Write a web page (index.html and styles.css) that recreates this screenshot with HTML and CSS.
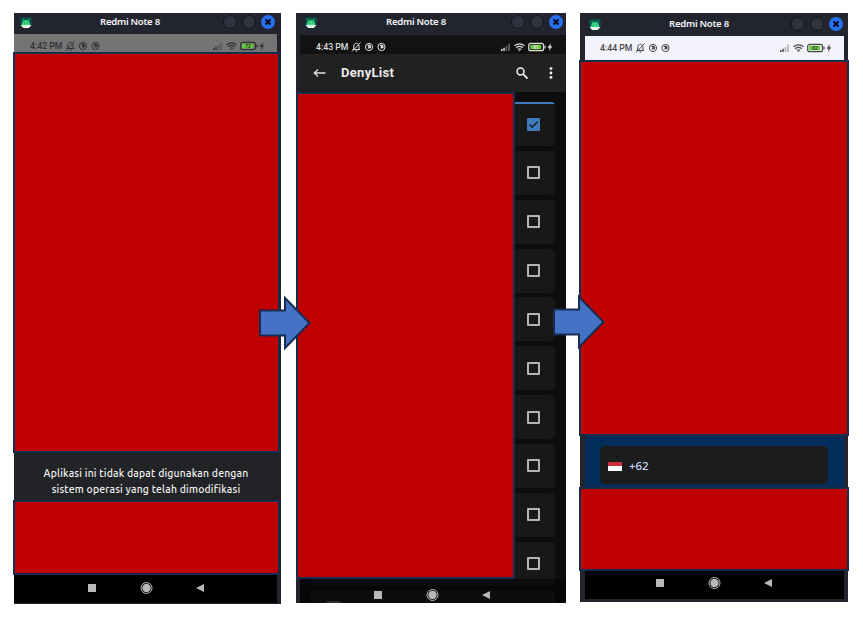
FILE: index.html
```
<!DOCTYPE html>
<html lang="id">
<head>
<meta charset="utf-8">
<title>DenyList</title>
<link rel="stylesheet" href="styles.css">
</head>
<body>
<svg class="defs" aria-hidden="true">
  <symbol id="android" viewBox="0 0 12 12">
    <path fill="#0b5850" d="M.5.5h11v8H.5z"/>
    <path fill="#3ddc84" d="M1.800 8.500C1.800 5 3.600 3.300 6 3.300s4.200 1.700 4.200 5.200z"/>
    <path stroke="#3ddc84" stroke-width=".7" d="M3 2l1 1.800M9 2L8 3.800"/>
    <path fill="#e4f5ec" d="M.5 8h11L10 9.800 8.800 11H3.200L2 9.800z"/>
    <path fill="#17814f" d="M4 5.500h1v1H4zM7 5.500h1v1H7z"/>
  </symbol>
  <symbol id="notices" viewBox="0 0 36 12">
    <g fill="none" stroke="currentColor" stroke-width="1">
      <path d="M1.500 8.500h7.500M2.700 8V5.200C2.700 1.400 8 1.400 8 5.200V8M4.500 10h2M1 10.500L9.500 1.500"/>
      <circle cx="18" cy="6" r="3.600"/><circle cx="30.500" cy="6" r="3.600"/>
      <path stroke-width="1.300" d="M16.500 4.500q2-1 3 .8l-2.500 2M18 4.500v2h2M29 4.500q2-1 3 .8l-2.500 2M30.500 4.500v2h2"/>
    </g>
  </symbol>
  <symbol id="signal" viewBox="0 0 54 12">
    <path fill="currentColor" d="M1 10V8h1.500v2zM3.300 10V6.800h1.500V10z"/>
    <path fill="currentColor" opacity=".4" d="M5.700 10V5h1.600v5zM8.200 10V2.500h1.600V10z"/>
    <g fill="none" stroke="currentColor" stroke-width="1.200">
      <path d="M14.500 4.800q5-4 10 0M16.200 6.700q3.300-2.600 6.600 0M17.800 8.400q1.700-1.300 3.400 0"/>
      <rect x="28.700" y="2.300" width="14.800" height="7.400" rx="2"/>
      <path d="M45 4.500v3"/>
    </g>
    <path fill="currentColor" d="M18.600 9h1.800l-.9 1.200zM50.800 2L47.500 6.700h2L49 10l3.300-4.800h-2z"/>
    <rect class="charge" x="30.200" y="3.700" width="11" height="4.600"/>
  </symbol>
  <symbol id="nav" viewBox="0 0 118 14">
    <path fill="#b9b9b9" d="M1 3h8v8H1zM117 3v8l-8-4z"/>
    <circle cx="59.500" cy="7" r="5.500" fill="none" stroke="#b9b9b9"/>
    <circle cx="59.500" cy="7" r="4.200" fill="#b9b9b9"/>
  </symbol>
  <symbol id="close" viewBox="0 0 14 14">
    <circle cx="7" cy="7" r="7" fill="#2670ee"/>
    <path d="M4.500 4.500l5 5m0-5l-5 5" stroke="#080c18" stroke-width="2"/>
  </symbol>
</svg>

<main class="board">
  <section class="phone phone-blocked">
    <header class="titlebar">
      <svg class="app"><use href="#android"/></svg><span class="name">Redmi Note 8</span>
      <i class="dot"></i><i class="dot"></i><svg class="close"><use href="#close"/></svg>
    </header>
    <div class="status"><span>4:42 PM</span><svg class="notices"><use href="#notices"/></svg>
      <div class="signal"><svg><use href="#signal"/></svg><b>72</b></div></div>
    <div class="mask mask-main"></div>
    <p class="message">Aplikasi ini tidak dapat digunakan dengan<br><span>sistem operasi yang telah dimodifikasi</span></p>
    <div class="mask mask-foot"></div>
    <nav class="nav"><svg><use href="#nav"/></svg></nav>
  </section>

  <section class="phone phone-list">
    <header class="titlebar">
      <svg class="app"><use href="#android"/></svg><span class="name">Redmi Note 8</span>
      <i class="dot"></i><i class="dot"></i><svg class="close"><use href="#close"/></svg>
    </header>
    <div class="status"><span>4:43 PM</span><svg class="notices"><use href="#notices"/></svg>
      <div class="signal"><svg><use href="#signal"/></svg><b>81</b></div></div>
    <div class="appbar">
      <svg class="back" viewBox="0 0 13 10"><path d="M12.500 5H1.500M5 1.500L1.300 5 5 8.500" fill="none" stroke="#dedede" stroke-width="1.300"/></svg>
      <h1>DenyList</h1>
      <svg class="search" viewBox="0 0 12 12"><circle cx="4.500" cy="4.500" r="3.500" fill="none" stroke="#f3f3f3" stroke-width="1.500"/><path d="M7.200 7.200l4.300 4.300" stroke="#f3f3f3" stroke-width="1.800"/></svg>
      <svg class="more" viewBox="0 0 4 12"><g fill="#fff"><circle cx="2" cy="1.600" r="1.400"/><circle cx="2" cy="6" r="1.400"/><circle cx="2" cy="10.400" r="1.400"/></g></svg>
    </div>
    <div class="list">
      <div class="card first"><svg class="check" viewBox="0 0 13 13"><rect width="13" height="13" rx="1" fill="#3f7bb8"/><path d="M2.500 6.500l2.700 2.700 5.300-5.500" fill="none" stroke="#15191e" stroke-width="1.400"/></svg></div>
      <div class="card"><i class="box"></i></div>
      <div class="card"><i class="box"></i></div>
      <div class="card"><i class="box"></i></div>
      <div class="card"><i class="box"></i></div>
      <div class="card"><i class="box"></i></div>
      <div class="card"><i class="box"></i></div>
      <div class="card"><i class="box"></i></div>
      <div class="card"><i class="box"></i></div>
      <div class="card"><i class="box"></i></div>
      <div class="card last"><i class="peek"></i></div>
    </div>
    <nav class="nav overlay"><svg><use href="#nav"/></svg></nav>
    <div class="mask mask-list"></div>
  </section>

  <section class="phone phone-login">
    <header class="titlebar">
      <svg class="app"><use href="#android"/></svg><span class="name">Redmi Note 8</span>
      <i class="dot"></i><i class="dot"></i><svg class="close"><use href="#close"/></svg>
    </header>
    <div class="status"><span>4:44 PM</span><svg class="notices"><use href="#notices"/></svg>
      <div class="signal"><svg><use href="#signal"/></svg><b>82</b></div></div>
    <div class="mask mask-main"></div>
    <div class="form"><div class="field"><i class="flag"></i><span>+62</span></div></div>
    <div class="mask mask-foot"></div>
    <nav class="nav"><svg><use href="#nav"/></svg></nav>
  </section>

  <svg class="arrow arrow-a" viewBox="0 0 52 54"><path d="M1 14.500h25V2l24.500 25L26 52V39.500H1z"/></svg>
  <svg class="arrow arrow-b" viewBox="0 0 52 54"><path d="M1 14.500h25V2l24.500 25L26 52V39.500H1z"/></svg>
</main>
</body>
</html>
```
FILE: styles.css
```
* { box-sizing: border-box; }
body { margin: 0; background: #fff; font-family: "Noto Sans", sans-serif; }
.defs { position: absolute; width: 0; height: 0; }
svg { display: block; flex: none; }

.board { position: relative; width: 863px; height: 619px; padding: 13px 0 0 14px; display: flex; align-items: flex-start; overflow: hidden; }
.phone { position: relative; flex: none; display: flex; flex-direction: column; background: #22242e; }
.phone-blocked { width: 267px; height: 591px; padding: 0 4px 1px 0; margin-right: 15px; }
.phone-list { width: 270px; height: 590px; padding-left: 4px; margin-right: 14px; overflow: hidden; }
.phone-login { width: 268px; height: 589px; padding: 0 4px 3px 5px; }

.titlebar { flex: none; height: 21px; display: flex; align-items: center; background: #22242e; color: #f4f4f4; padding-left: 6px; margin-right: -4px; padding-bottom: 3px; }
.app { width: 12px; height: 12px; margin-top: 2px; }
.name { width: 61px; margin-left: 68px; margin-right: 62px; font-size: 9.6px; font-weight: 600; line-height: 14px; letter-spacing: -.28px; white-space: nowrap; }
.dot { flex: none; width: 14px; height: 14px; margin-right: 5px; border-radius: 50%; background: #30333f; border: 1px solid #11131b; }
.close { width: 14px; height: 14px; }
.phone-list .titlebar { height: 22px; padding-left: 5px; padding-bottom: 4px; margin-right: 0; }
.phone-list .name { margin-left: 69px; margin-right: 64px; }
.phone-login .titlebar { height: 23px; padding-left: 4px; padding-bottom: 1px; }
.phone-login .name { margin-left: 68px; margin-right: 61px; }

.status { flex: none; display: flex; align-items: center; font: 500 8.7px/12px Roboto, sans-serif; white-space: nowrap; }
.status > span { width: 35px; }
.notices { width: 36px; height: 12px; }
.signal { position: relative; margin-left: auto; width: 54px; height: 12px; }
.signal svg { width: 54px; height: 12px; }
.signal b { position: absolute; left: 30px; top: 3px; width: 12px; text-align: center; font: 700 5px/6px "Liberation Sans", sans-serif; }
.phone-blocked .status { height: 18px; padding: 5px 11px 0 16px; background: #747474; color: #303030; }
.phone-list .status { height: 19px; padding: 4px 12px 0 16px; background: #121212; color: #dedede; }
.phone-login .status { height: 24px; padding: 0 11px 0 15px; background: #f3f3fc; color: #484848; }
.charge { fill: #67c93a; }

.mask { flex: none; background: #c00000; border: 2px solid #172c51; }
.phone-blocked .mask { width: 267px; margin-left: -1px; }
.phone-blocked .mask-main { height: 401px; }
.phone-blocked .mask-foot { height: 75px; }
.phone-login .mask { width: 270px; margin-left: -6px; }
.phone-login .mask-main { height: 376px; }
.phone-login .mask-foot { height: 84px; }

.message { flex: none; margin: 0 -4px 0 0; height: 47px; padding: 12px 4px 0 1px; background: #222327; color: #f2f2f2; font: 500 10.4px/16px Ubuntu, "Noto Sans", sans-serif; letter-spacing: .2px; text-align: center; white-space: nowrap; }

.nav { flex: 1; background: #000; }
.nav svg { width: 118px; height: 14px; margin: 6px 0 0 72.500px; }
.phone-login .nav svg { margin: 5px 0 0 70px; }

.appbar { flex: none; height: 38px; display: flex; align-items: center; background: #212121; padding: 0 14px 1px 13px; }
.back { width: 13px; height: 10px; }
.appbar h1 { margin: 0 auto 0 15px; color: #e9e9e9; font: 700 13px/18px Roboto, sans-serif; letter-spacing: .3px; }
.search { width: 12px; height: 12px; margin-right: 21px; }
.more { width: 4px; height: 12px; margin-right: -1px; }
.list { flex: 1; background: #0d0d0d; padding: 10px 11px 0; min-height: 0; overflow: hidden; }
.card { display: flex; align-items: center; justify-content: flex-end; height: 44px; margin-bottom: 4.850px; padding-right: 15px; border-radius: 4px; background: #181818; }
.card.first { background: linear-gradient(#3f7bb8 2px, #181818 2px); }
.check { width: 13px; height: 13px; }
.box { width: 13px; height: 13px; border: 2px solid #b4b4b4; border-radius: 1px; }
.card.last { justify-content: flex-start; align-items: flex-start; }
.peek { width: 15px; height: 6px; margin: 11px 0 0 15px; border-radius: 3px; background: #555; }
.overlay { position: absolute; left: 4px; right: 0; bottom: 0; height: 24px; background: rgba(0, 0, 0, .45); }
.overlay svg { margin: 9px 0 0 73px; }
.mask-list { position: absolute; left: 0; top: 79px; width: 219px; height: 487px; }

.form { flex: none; height: 51px; padding: 10px 16px 3px 15px; background: #032e5b; }
.field { height: 38px; display: flex; align-items: center; padding-left: 8px; border-radius: 5px; background: #1c1c1c; color: #c2d9f3; font: 500 11.5px/14px "Noto Sans", sans-serif; }
.field span { margin-top: 2px; letter-spacing: -.1px; }
.flag { width: 14px; height: 9px; margin: 3px 7px 0 0; background: linear-gradient(#c9303e 50%, #fff 50%); }

.arrow { position: absolute; width: 52px; height: 54px; overflow: visible; }
.arrow path { fill: #4472c4; stroke: #172c51; stroke-width: 2; }
.arrow-a { left: 259px; top: 296px; }
.arrow-b { left: 553px; top: 295px; }
```
